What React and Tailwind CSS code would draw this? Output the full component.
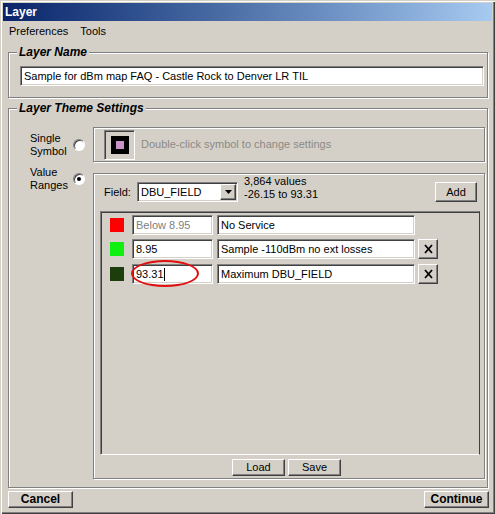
import React from 'react'

const raised =
  'bg-[#d4d0c8] border border-t-white border-l-white border-r-[#404040] border-b-[#404040] shadow-[inset_-1px_-1px_0_#808080]'
const sunken =
  'bg-white border border-t-[#808080] border-l-[#808080] border-b-white border-r-white shadow-[inset_1px_1px_0_#404040,inset_-1px_-1px_0_#d4d0c8]'
const etched = 'border border-[#808080] shadow-[inset_1px_1px_0_#fff,1px_1px_0_#fff]'

function Radio({ checked }) {
  return (
    <span className="w-[12px] h-[12px] rounded-full bg-white border border-t-[#808080] border-l-[#808080] border-b-white border-r-white shadow-[inset_1px_1px_0_#404040] flex items-center justify-center shrink-0">
      {checked && <span className="w-[4px] h-[4px] rounded-full bg-black" />}
    </span>
  )
}

function XButton() {
  return (
    <button className={`${raised} w-[20px] h-[20px] flex items-center justify-center shrink-0`}>
      <svg width="9" height="10" viewBox="0 0 9 10">
        <path d="M1 1 L8 9 M8 1 L1 9" stroke="#000" strokeWidth="1.8" />
      </svg>
    </button>
  )
}

function Row({ color, from, label, grey, removable, circled }) {
  return (
    <div className="flex items-center h-[20px]">
      <span className="w-[14px] h-[14px] shrink-0" style={{ background: color }} />
      <div className={`${sunken} relative ml-[8px] w-[81px] h-[20px] flex items-center pl-[3px]`}>
        <span className={grey ? 'text-[#808080]' : 'text-black'}>{from}</span>
        {circled && <span className="w-px h-[13px] bg-black" />}
        {circled && (
          <span className="absolute left-[-2px] top-[-5px] w-[68px] h-[27px] rounded-[50%] border-2 border-[#e01010]" />
        )}
      </div>
      <div className={`${sunken} ml-[4px] w-[198px] h-[20px] flex items-center pl-[3px]`}>{label}</div>
      {removable && (
        <div className="ml-[3px]">
          <XButton />
        </div>
      )}
    </div>
  )
}

export default function App() {
  return (
    <div className="w-[495px] h-[514px] bg-[#d4d0c8] flex flex-col p-[3px] text-[11px] leading-[13px] text-black font-['Liberation_Sans',Arial,sans-serif] shadow-[inset_1px_1px_0_#d4d0c8,inset_2px_2px_0_#fff,inset_-1px_-1px_0_#404040,inset_-2px_-2px_0_#808080]">
      {/* title bar */}
      <div className="h-[18px] shrink-0 flex items-center pl-[2px] bg-gradient-to-r from-[#0a246a] to-[#a6caf0]">
        <span className="text-white font-bold text-[12px]">Layer</span>
      </div>

      {/* menu */}
      <div className="h-[21px] shrink-0 flex items-center pl-[6px] gap-[12px]">
        <span>Preferences</span>
        <span>Tools</span>
      </div>

      {/* Layer Name */}
      <fieldset className={`${etched} ml-[5px] mr-[4px] mt-[3px] pl-[11px] pr-[3px] pt-[7px] pb-[11px]`}>
        <legend className="-ml-[3px] px-[2px] bg-[#d4d0c8] text-[12px] leading-[14px] font-bold italic">Layer Name</legend>
        <div className={`${sunken} h-[20px] flex items-center pl-[3px]`}>
          Sample for dBm map FAQ - Castle Rock to Denver LR TIL
        </div>
      </fieldset>

      {/* Layer Theme Settings */}
      <fieldset className={`${etched} ml-[5px] mr-[4px] mt-[3px] pt-[12px] pb-[8px]`}>
        <legend className="ml-[8px] px-[2px] bg-[#d4d0c8] text-[12px] leading-[14px] font-bold italic">
          Layer Theme Settings
        </legend>

        <div className="flex items-center h-[35px]">
          <div className="flex items-center pl-[21px]">
            <span className="w-[43px]">
              Single
              <br />
              Symbol
            </span>
            <Radio />
          </div>
          <div className={`${etched} ml-[8px] mr-[2px] flex-1 h-[35px] flex items-center pl-[10px]`}>
            <div className="w-[31px] h-[30px] border border-t-[#808080] border-l-[#808080] border-b-white border-r-white shadow-[inset_1px_1px_0_#404040] flex items-center justify-center">
              <span className="w-[18px] h-[18px] bg-black flex items-center justify-center">
                <span className="w-[8px] h-[8px] bg-[#c894c8]" />
              </span>
            </div>
            <span className="ml-[6px] text-[#8c8a86]">Double-click symbol to change settings</span>
          </div>
        </div>

        <div className="flex items-start mt-[11px]">
          <div className="flex items-center pl-[21px] h-[26px] -mt-[7px]">
            <span className="w-[43px]">
              Value
              <br />
              Ranges
            </span>
            <Radio checked />
          </div>
          <div className={`${etched} ml-[8px] mr-[2px] flex-1 h-[306px] flex flex-col`}>
            <div className="flex items-start mt-[8px] pl-[10px] pr-[7px]">
              <span className="w-[33px] h-[20px] flex items-center">Field:</span>
              <div className={`${sunken} w-[101px] h-[20px] flex items-center pl-[3px] pr-[1px]`}>
                <span className="flex-1">DBU_FIELD</span>
                <span className={`${raised} w-[16px] h-[16px] flex items-center justify-center`}>
                  <svg width="7" height="4" viewBox="0 0 7 4">
                    <path d="M0 0 H7 L3.5 4 Z" fill="#000" />
                  </svg>
                </span>
              </div>
              <div className="ml-[6px] -mt-[7px]">
                3,864 values
                <br />
                -26.15 to 93.31
              </div>
              <button className={`${raised} ml-auto w-[42px] h-[20px] flex items-center justify-center`}>Add</button>
            </div>

            <div className="ml-[6px] mr-[4px] mt-[9px] h-[244px] border border-t-[#808080] border-l-[#808080] border-b-white border-r-[#404040] shadow-[inset_1px_1px_0_#404040] pt-[3px] pl-[9px] flex flex-col gap-[4px]">
              <Row color="#ff0000" from="Below 8.95" label="No Service" grey />
              <Row color="#10f010" from="8.95" label="Sample -110dBm no ext losses" removable />
              <div className="mt-[1px]">
                <Row color="#1c3e0c" from="93.31" label="Maximum DBU_FIELD" removable circled />
              </div>
            </div>

            <div className="flex justify-center gap-[3px] mt-[4px] pr-[5px]">
              <button className={`${raised} w-[53px] h-[17px] flex items-center justify-center`}>Load</button>
              <button className={`${raised} w-[53px] h-[17px] flex items-center justify-center`}>Save</button>
            </div>
          </div>
        </div>
      </fieldset>

      {/* footer */}
      <div className="flex items-center justify-between mt-[3px] ml-[5px] mr-[3px]">
        <button className={`${raised} w-[65px] h-[17px] flex items-center justify-center font-bold text-[12px]`}>Cancel</button>
        <button className={`${raised} w-[65px] h-[17px] flex items-center justify-center font-bold text-[12px]`}>Continue</button>
      </div>
    </div>
  )
}
